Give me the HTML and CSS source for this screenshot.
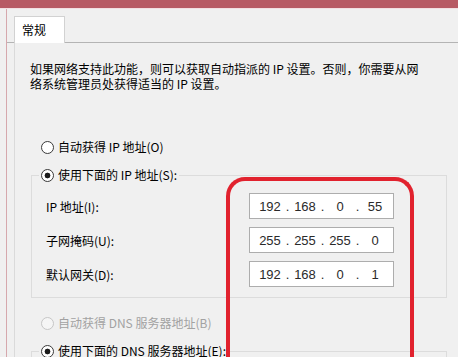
FILE: index.html
```html
<!DOCTYPE html>
<html lang="zh-CN">
<head>
  <meta charset="UTF-8">
  <meta name="viewport" content="width=device-width, initial-scale=1.0">
  <title>Internet 协议版本 4 (TCP/IPv4) 属性</title>
  <link rel="stylesheet" href="styles.css">
</head>
<body>

  <div class="titlebar"></div>

  <div class="window">
    <div class="tabs">
      <div class="tab">常规</div>
    </div>

    <div class="pane">
      <p class="intro">如果网络支持此功能，则可以获取自动指派的 IP 设置。否则，你需要从网络系统管理员处获得适当的 IP 设置。</p>

      <div class="option"><span class="radio"></span>自动获得 IP 地址(O)</div>

      <!-- IP 地址 -->
      <fieldset class="group">
        <legend class="option legend"><span class="radio checked"></span>使用下面的 IP 地址(S):</legend>
        <div class="field-grid">
          <span>IP 地址(I):</span>
          <div class="ip"><span>192</span><i>.</i><span>168</span><i>.</i><span>0</span><i>.</i><span>55</span></div>

          <span>子网掩码(U):</span>
          <div class="ip"><span>255</span><i>.</i><span>255</span><i>.</i><span>255</span><i>.</i><span>0</span></div>

          <span>默认网关(D):</span>
          <div class="ip"><span>192</span><i>.</i><span>168</span><i>.</i><span>0</span><i>.</i><span>1</span></div>
        </div>
      </fieldset>

      <!-- DNS -->
      <div class="option disabled dns-auto"><span class="radio"></span>自动获得 DNS 服务器地址(B)</div>

      <fieldset class="group dns-group">
        <legend class="option legend"><span class="radio checked"></span>使用下面的 DNS 服务器地址(E):</legend>
      </fieldset>
    </div>
  </div>

  <div class="highlight"></div>

</body>
</html>
```

FILE: styles.css
```css
body {
  margin: 0;
  background-color: #f0f0f0;
  font-family: "Noto Sans CJK SC", sans-serif;
  font-size: 12px;
  color: #000;
  overflow: hidden;
  height: 357px;
}

.titlebar {
  height: 9px;
  background-color: #b75a64;
  border-bottom: 1px solid #f2dfe1;
  box-sizing: border-box;
}

.window {
  margin-left: 6px;
  border-left: 1px solid #d6a8ad;
  height: 348px;
  overflow: hidden;
}

.tabs {
  display: flex;
  padding: 7px 0 0 7px;
  border-bottom: 1px solid #b4b4b4;
  height: 26px;
}

.tab {
  width: 51px;
  height: 27px;
  box-sizing: border-box;
  padding-left: 7px;
  line-height: 26px;
  background-color: #fff;
  border: 1px solid #d2d2d2;
  border-bottom: none;
  margin-bottom: -1px;
}

.pane {
  margin-left: 7px;
  border-left: 1px solid #dadada;
  padding: 18px 0 0 15px;
  height: 300px;
}

.intro {
  margin: 0;
  width: 395px;
  line-height: 15px;
}

.option {
  display: flex;
  align-items: center;
  gap: 4px;
  height: 16px;
  line-height: 16px;
  margin: 48px 0 0 11px;
}

.radio {
  width: 13px;
  height: 13px;
  box-sizing: border-box;
  border-radius: 50%;
  border: 1px solid #3a3a3a;
  background-color: #fff;
}

.radio.checked {
  background: radial-gradient(circle, #1a1a1a 0 2.6px, #fff 3.2px);
}

.disabled {
  color: #a2a2a2;
}

.disabled .radio {
  border-color: #c6c6c6;
  background-color: #f5f5f5;
}

.group {
  width: 416px;
  box-sizing: border-box;
  margin: 12px 0 0 1px;
  padding: 10px 0 10px 0;
  border: 1px solid #dcdcdc;
}

.legend {
  margin: 0 0 0 7px;
  padding: 0 2px;
}

.field-grid {
  display: grid;
  grid-template-columns: 203px 145px;
  row-gap: 8px;
  align-items: center;
  padding-left: 14px;
}

.ip {
  display: flex;
  align-items: center;
  width: 145px;
  height: 26px;
  box-sizing: border-box;
  padding-left: 5px;
  background-color: #fff;
  border: 1px solid #adadad;
  font-family: "Liberation Sans", Arial, sans-serif;
  font-size: 13px;
  color: #2a2a2a;
}

.ip span {
  width: 30px;
  text-align: center;
}

.ip i {
  width: 5px;
  font-style: normal;
  text-align: center;
}

.dns-auto {
  margin-top: 17px;
}

.dns-group {
  height: 30px;
}

.highlight {
  position: absolute;
  left: 226px;
  top: 177px;
  width: 188px;
  height: 180px;
  box-sizing: border-box;
  border: 4px solid #e1222e;
  border-bottom: none;
  border-radius: 19px 19px 0 0;
}
```
